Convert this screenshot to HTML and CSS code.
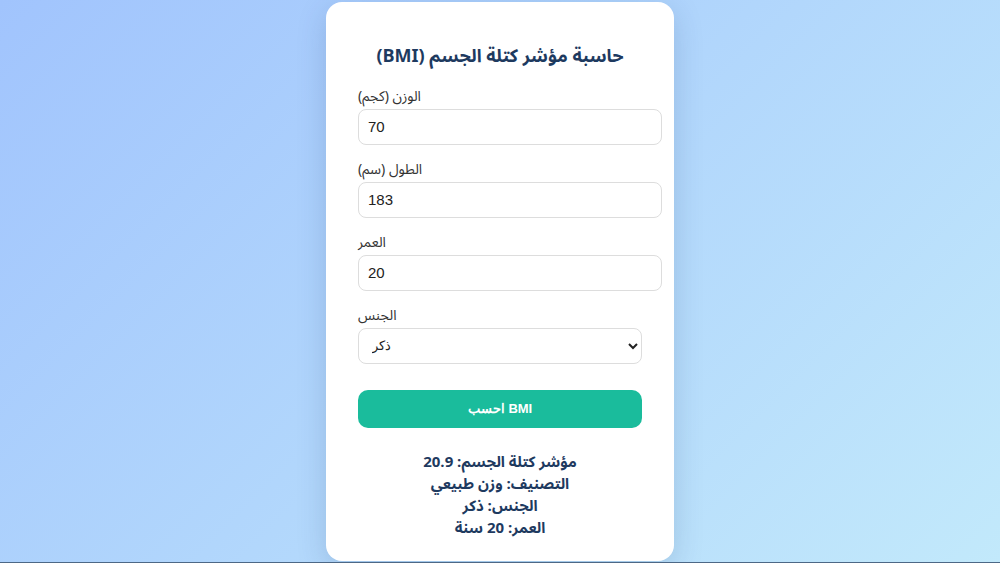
FILE: index.html
```html
<!DOCTYPE html>
<html lang="ar">
<head>
<meta charset="utf-8">
<title>حاسبة مؤشر كتلة الجسم (BMI)</title>
<link rel="stylesheet" href="styles.css">
</head>
<body>
<main class="card">
  <h2 class="title" dir="rtl">حاسبة مؤشر كتلة الجسم (BMI)</h2>
  <div class="group">
    <label class="label" for="w">الوزن (كجم)</label>
    <input class="field" id="w" type="number" value="70">
  </div>
  <div class="group">
    <label class="label" for="h">الطول (سم)</label>
    <input class="field" id="h" type="number" value="183">
  </div>
  <div class="group">
    <label class="label" for="a">العمر</label>
    <input class="field" id="a" type="number" value="20">
  </div>
  <div class="group">
    <label class="label" for="g">الجنس</label>
    <select class="select" id="g">
      <option>ذكر</option>
      <option>أنثى</option>
    </select>
  </div>
  <button class="btn" type="button">احسب BMI</button>
  <div class="result" dir="rtl">
    <div>مؤشر كتلة الجسم: 20.9</div>
    <div>التصنيف: وزن طبيعي</div>
    <div>الجنس: ذكر</div>
    <div>العمر: 20 سنة</div>
  </div>
</main>
</body>
</html>
```
FILE: styles.css
```css
html, body {
  margin: 0;
  padding: 0;
}
body {
  box-sizing: border-box;
  min-height: 100vh;
  border-bottom: 1px solid #4d6886;
  background: linear-gradient(135deg, #a1c4fd 0%, #c2e9fb 100%);
  display: flex;
  align-items: center;
  justify-content: center;
  font-family: "Noto Sans Arabic", "Noto Naskh Arabic", "DejaVu Sans Condensed", "DejaVu Sans", sans-serif;
}
.card {
  width: 284px;
  padding: 30px 32px 22px;
  background: #fff;
  border-radius: 16px;
  box-shadow: 0 8px 30px rgba(30, 60, 110, 0.18);
}
.title {
  margin: 8px 0 15px;
  font-size: 18px;
  line-height: 32px;
  font-weight: 700;
  text-align: center;
  white-space: nowrap;
  color: #1e3a5f;
}
.group {
  margin-bottom: 15px;
}
.label {
  display: block;
  margin-bottom: 2px;
  font-size: 14px;
  line-height: 20px;
  color: #333;
}
.field {
  display: block;
  width: 100%;
  height: 34px;
  padding: 0 9px;
  margin: 0;
  border: 1px solid #ddd;
  border-radius: 8px;
  font-family: "Liberation Sans", Arial, sans-serif;
  font-size: 15px;
  color: #222;
  background: #fff;
  outline: none;
  -moz-appearance: textfield;
}
.field::-webkit-outer-spin-button,
.field::-webkit-inner-spin-button {
  -webkit-appearance: none;
  margin: 0;
}
.select {
  display: block;
  width: 100%;
  height: 36px;
  margin: 0;
  padding: 0 9px;
  border: 1px solid #ddd;
  border-radius: 8px;
  background: #fff;
  font-family: "Liberation Sans", Arial, sans-serif;
  font-size: 13px;
  color: #222;
}
.btn {
  display: block;
  width: 100%;
  height: 38px;
  margin: 26px 0 0;
  border: none;
  border-radius: 10px;
  background: #1abc9c;
  color: #fff;
  font-family: "Liberation Sans", Arial, sans-serif;
  font-size: 13px;
  font-weight: 700;
}
.result {
  margin-top: 23px;
  text-align: center;
  font-size: 15px;
  line-height: 22px;
  font-weight: 700;
  color: #1e3a5f;
}
```
